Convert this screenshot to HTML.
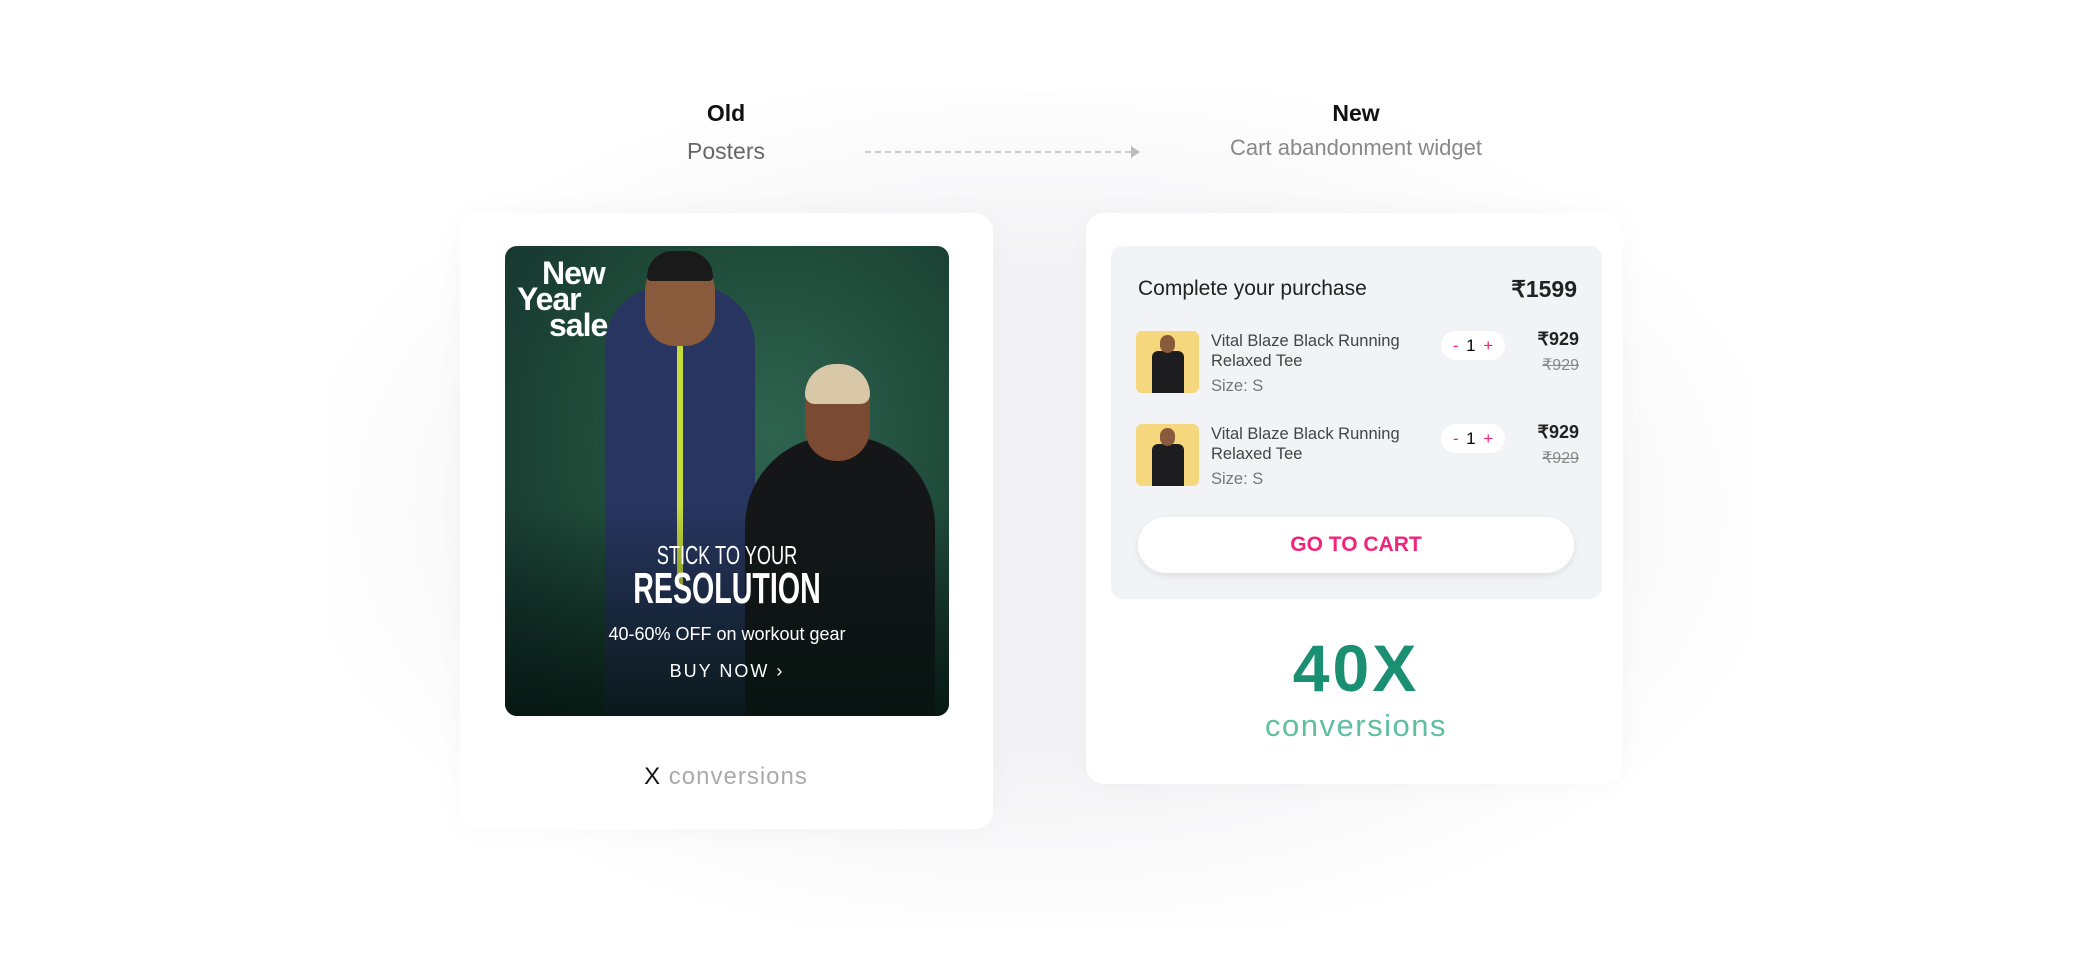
<!DOCTYPE html><html><head><style>
*{margin:0;padding:0;box-sizing:border-box}
body{width:2080px;height:964px;background:#fff;font-family:"Liberation Sans",sans-serif;position:relative;overflow:hidden}
.a{position:absolute}
.glow{position:absolute;left:330px;top:90px;width:1420px;height:840px;border-radius:300px;background:radial-gradient(ellipse at center,#f3f3f5 40%,#fff 75%)}
.card{position:absolute;background:#fff;border-radius:18px;box-shadow:0 0 30px rgba(0,0,0,0.03)}
.c{text-align:center;transform:translateX(-50%)}
.t{font-size:16.5px;color:#444;line-height:20px}
.pill{position:absolute;width:64px;height:29px;background:#fff;border-radius:15px;font-size:17px;display:flex;justify-content:space-around;align-items:center;padding:0 8px}
.pill b{color:#f0247a;font-weight:normal}
</style></head><body>
<div class="glow"></div>
<div class="a c" style="left:726px;top:100px;font-size:23px;font-weight:bold;color:#111">Old</div>
<div class="a c" style="left:726px;top:138px;font-size:23px;color:#666">Posters</div>
<div class="a c" style="left:1356px;top:100px;font-size:23px;font-weight:bold;color:#111">New</div>
<div class="a c" style="left:1356px;top:135px;font-size:22px;color:#888;white-space:nowrap">Cart abandonment widget</div>
<div class="a" style="left:865px;top:151px;width:266px;border-top:2px dashed #ccc"></div>
<div class="a" style="left:1131px;top:146px;width:0;height:0;border-left:9px solid #bbb;border-top:6px solid transparent;border-bottom:6px solid transparent"></div>

<div class="card" style="left:460px;top:213px;width:533px;height:616px"></div>
<div class="a" style="left:505px;top:246px;width:444px;height:470px;border-radius:12px;overflow:hidden;background:radial-gradient(ellipse at 60% 40%,#2f6450 0%,#1f4a3a 50%,#13302a 100%)">
 <div class="a" style="left:100px;top:40px;width:150px;height:440px;background:#283560;border-radius:60px 60px 0 0"></div>
 <div class="a" style="left:140px;top:10px;width:70px;height:90px;background:#8a5a3c;border-radius:35px 35px 30px 30px"></div>
 <div class="a" style="left:142px;top:5px;width:66px;height:30px;background:#1a1a1a;border-radius:30px 30px 5px 5px"></div>
 <div class="a" style="left:172px;top:100px;width:6px;height:240px;background:#c8d93a"></div>
 <div class="a" style="left:240px;top:190px;width:190px;height:300px;background:#151618;border-radius:90px 90px 0 0"></div>
 <div class="a" style="left:300px;top:125px;width:65px;height:90px;background:#7a4a33;border-radius:32px"></div>
 <div class="a" style="left:300px;top:118px;width:65px;height:40px;background:#d8c8a8;border-radius:32px 32px 10px 10px"></div>
 <div class="a" style="left:0;top:260px;width:444px;height:210px;background:linear-gradient(transparent,rgba(5,20,15,0.85))"></div>
 <div class="a" style="left:12px;top:14px;color:#fff;font-weight:bold;font-size:32px;line-height:26px;letter-spacing:-1px"><div style="padding-left:25px">New</div><div>Year</div><div style="padding-left:32px">sale</div></div>
 <div class="a c" style="left:222px;top:294px;color:#fff;font-size:26px;transform:translateX(-50%) scaleX(0.7);white-space:nowrap">STICK TO YOUR</div>
 <div class="a c" style="left:222px;top:318px;color:#fff;font-size:44px;font-weight:bold;transform:translateX(-50%) scaleX(0.65);white-space:nowrap">RESOLUTION</div>
 <div class="a c" style="left:222px;top:378px;color:#fff;font-size:18px;white-space:nowrap">40-60% OFF on workout gear</div>
 <div class="a c" style="left:222px;top:415px;color:#fff;font-size:18px;letter-spacing:2px;white-space:nowrap">BUY NOW ›</div>
</div>
<div class="a c" style="left:726px;top:763px;font-size:24px;color:#aaa;letter-spacing:1px;white-space:nowrap"><span style="color:#111">X</span> conversions</div>

<div class="card" style="left:1086px;top:213px;width:537px;height:571px"></div>
<div class="a" style="left:1111px;top:246px;width:491px;height:353px;background:#f2f3f7;border-radius:12px"></div>
<div class="a" style="left:1138px;top:277px;font-size:21px;color:#222">Complete your purchase</div>
<div class="a" style="left:1495px;top:276px;width:82px;text-align:right;font-size:23px;font-weight:bold;color:#222">₹1599</div>

<div class="a" style="left:1136px;top:331px;width:63px;height:62px;background:#f5d77d;border-radius:6px;overflow:hidden"><div class="a" style="left:16px;top:20px;width:32px;height:42px;background:#1d1d1f;border-radius:6px 6px 0 0"></div><div class="a" style="left:24px;top:4px;width:15px;height:18px;background:#8a5a3c;border-radius:8px"></div></div>
<div class="a t" style="left:1211px;top:331px">Vital Blaze Black Running<br>Relaxed Tee</div>
<div class="a t" style="left:1211px;top:376px;color:#777">Size: S</div>
<div class="pill" style="left:1441px;top:331px"><b>-</b>1<b>+</b></div>
<div class="a" style="left:1500px;top:329px;width:79px;text-align:right;font-size:18px;font-weight:bold;color:#222">₹929</div>
<div class="a" style="left:1500px;top:355px;width:79px;text-align:right;font-size:16px;color:#888;text-decoration:line-through">₹929</div>

<div class="a" style="left:1136px;top:424px;width:63px;height:62px;background:#f5d77d;border-radius:6px;overflow:hidden"><div class="a" style="left:16px;top:20px;width:32px;height:42px;background:#1d1d1f;border-radius:6px 6px 0 0"></div><div class="a" style="left:24px;top:4px;width:15px;height:18px;background:#8a5a3c;border-radius:8px"></div></div>
<div class="a t" style="left:1211px;top:424px">Vital Blaze Black Running<br>Relaxed Tee</div>
<div class="a t" style="left:1211px;top:469px;color:#777">Size: S</div>
<div class="pill" style="left:1441px;top:424px"><b>-</b>1<b>+</b></div>
<div class="a" style="left:1500px;top:422px;width:79px;text-align:right;font-size:18px;font-weight:bold;color:#222">₹929</div>
<div class="a" style="left:1500px;top:448px;width:79px;text-align:right;font-size:16px;color:#888;text-decoration:line-through">₹929</div>

<div class="a" style="left:1138px;top:517px;width:436px;height:56px;background:#fff;border-radius:28px;box-shadow:0 3px 8px rgba(0,0,0,0.08);text-align:center;line-height:56px;color:#f0247a;font-weight:bold;font-size:21px">GO TO CART</div>
<div class="a c" style="left:1356px;top:630px;font-size:66px;font-weight:bold;color:#1a8f72;letter-spacing:3px">40X</div>
<div class="a c" style="left:1356px;top:708px;font-size:31px;color:#5fbfa0;letter-spacing:1.5px">conversions</div>
</body></html>
